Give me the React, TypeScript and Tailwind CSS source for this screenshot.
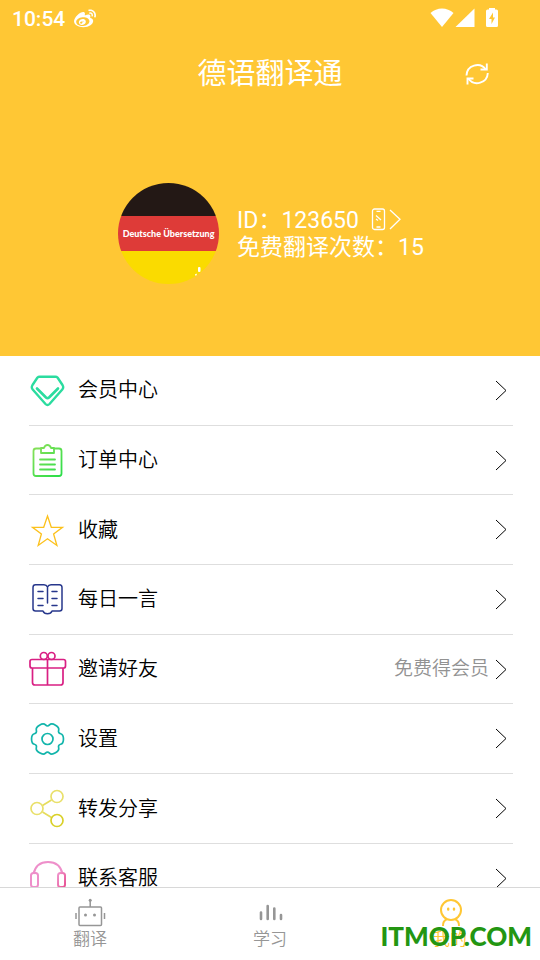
import type { ReactNode } from "react";
import { FaWeibo } from "react-icons/fa";

type MenuItem = {
  label: string;
  icon: ReactNode;
  note?: string;
};

function Chevron() {
  return (
    <svg width="12" height="21" viewBox="0 0 12 21" fill="none" stroke="currentColor" strokeWidth="1">
      <path d="M1 1L11 10.5L1 20" />
    </svg>
  );
}

function DiamondIcon() {
  return (
    <svg width="36" height="36" viewBox="0 0 36 36" fill="none" stroke="#2bdc9f" strokeLinejoin="round" strokeLinecap="round">
      <path strokeWidth="2.4" d="M10.500 4.700H26.500Q27.700 4.700 28.500 5.500L33.500 13Q35 15.500 33.300 17.500L20.500 32Q18.500 34 16.500 32L3.700 17.500Q2 15.500 3.500 13L8.500 5.500Q9.300 4.700 10.500 4.700Z" />
      <path strokeWidth="2.600" d="M8 16.500L17 25.500Q18.500 26.900 20 25.500L29 16.500" />
    </svg>
  );
}

function ClipboardIcon() {
  return (
    <svg width="36" height="36" viewBox="0 0 36 36" fill="none" stroke="url(#clip)" strokeWidth="1.800" strokeLinecap="round" strokeLinejoin="round">
      <defs>
        <linearGradient id="clip" gradientUnits="userSpaceOnUse" x1="4" y1="2" x2="32" y2="34">
          <stop offset="0" stopColor="#8fe05a" />
          <stop offset="1" stopColor="#2ade48" />
        </linearGradient>
      </defs>
      <path d="M11.500 6.500H7Q4.500 6.500 4.500 9V31.500Q4.500 34 7 34H30Q32.500 34 32.500 31.500V9Q32.500 6.500 30 6.500H25" />
      <path d="M12 11V6H15Q16 3 18.500 3T22 6H25V11Z" />
      <path d="M11 17.500H26M11 22.500L26 22.510M11 27.500H26" />
    </svg>
  );
}

function StarIcon() {
  return (
    <svg width="36" height="36" viewBox="0 0 36 36" fill="none" stroke="#fcc11c" strokeWidth="1.300">
      <path d="M18.500 4L22.300 15.300H33.500L24.600 22L27.900 33.500L18.500 26.800L9.200 33.500L12.400 22L3.500 15.300H14.700Z" />
    </svg>
  );
}

function BookIcon() {
  return (
    <svg width="36" height="36" viewBox="0 0 36 36" fill="none" stroke="#27378c" strokeWidth="1.500" strokeLinecap="round" strokeLinejoin="round">
      <path d="M18.500 22V6Q17.500 3.800 15 3.800H6.500Q4 3.800 4 6.500V27.500Q4 30 6.500 30H14Q15 32.800 18.500 32.800T23 30H30.500Q33 30 33 27.500V6.500Q33 3.800 30.500 3.800H22Q19.500 3.800 18.500 6" />
      <path d="M9 10.500H14M9 17.500H14M9 24.500H14M23 10.500H28M23 17.500H28M23 24.500H28" />
    </svg>
  );
}

function GiftIcon() {
  return (
    <svg width="38" height="36" viewBox="0 0 38 36" fill="none" stroke="#d91f83" strokeWidth="1.700" strokeLinejoin="round">
      <rect x="1" y="8.500" width="35.500" height="8.500" rx="2" />
      <path d="M3.500 17V31.500Q3.500 34 6 34H31.500Q34 34 34 31.500V17M18.500 8.500V34" />
      <circle cx="14.800" cy="5" r="3.500" />
      <circle cx="22.500" cy="5" r="3.500" />
    </svg>
  );
}

// Six-tooth cog: two outer points per tooth, one valley point between teeth,
// rounded by running the curve through the segment midpoints.
function cogPath(cx: number, cy: number, outer: number, inner: number) {
  const pts: [number, number][] = [];
  const add = (deg: number, r: number) => {
    const a = (deg * Math.PI) / 180;
    pts.push([cx + r * Math.cos(a), cy + r * Math.sin(a)]);
  };
  for (let i = 0; i < 6; i++) {
    add(i * 60 - 16, outer);
    add(i * 60 + 16, outer);
    add(i * 60 + 30, inner);
  }
  const mid = (i: number) => {
    const [x1, y1] = pts[i % pts.length];
    const [x2, y2] = pts[(i + 1) % pts.length];
    return `${((x1 + x2) / 2).toFixed(2)} ${((y1 + y2) / 2).toFixed(2)}`;
  };
  let d = `M${mid(0)}`;
  for (let i = 1; i <= pts.length; i++) {
    const [x, y] = pts[i % pts.length];
    d += `Q${x.toFixed(2)} ${y.toFixed(2)} ${mid(i)}`;
  }
  return d + "Z";
}

function GearIcon() {
  return (
    <svg width="36" height="36" viewBox="0 0 36 36" fill="none" stroke="#12b5ab" strokeWidth="1.700">
      <path d={cogPath(18.5, 18, 16.6, 12)} />
      <circle cx="18.500" cy="18" r="5.500" />
    </svg>
  );
}

function ShareIcon() {
  return (
    <svg width="36" height="40" viewBox="0 0 36 40" fill="none" strokeWidth="1.700">
      <path stroke="#e6dc5c" d="M13.500 16.500L22.500 11M13.500 23L22.500 28.500" />
      <circle stroke="#e9e06a" cx="8" cy="19.500" r="6" />
      <circle stroke="#e9e06a" cx="28" cy="7.500" r="6" />
      <circle stroke="#d9d028" cx="28" cy="31.500" r="6" />
    </svg>
  );
}

function HeadsetIcon() {
  return (
    <svg width="38" height="36" viewBox="0 0 38 36" fill="none" strokeWidth="2">
      <defs>
        <linearGradient id="ear" x1="0" y1="0" x2="1" y2="1">
          <stop offset="0" stopColor="#f095cc" />
          <stop offset="1" stopColor="#e85193" />
        </linearGradient>
      </defs>
      <path stroke="#ee8fca" d="M4.500 14Q7 2 19 2T33.500 14" />
      <rect stroke="#ee8fca" x="2" y="13" width="7" height="14" rx="2.500" />
      <rect stroke="url(#ear)" x="29" y="13" width="7" height="14" rx="2.500" />
    </svg>
  );
}

function Avatar() {
  return (
    <div className="relative flex size-[101px] shrink-0 flex-col overflow-hidden rounded-full">
      <div className="flex-1 bg-[#231815]" />
      <div className="flex h-[35px] items-center justify-center bg-[#de3b38] font-['Lato',sans-serif] text-[9px] font-black whitespace-nowrap text-white">
        Deutsche Übersetzung
      </div>
      <div className="flex-1 bg-[#fadb00]" />
      <svg className="absolute right-[18px] bottom-2" width="6" height="9" viewBox="0 0 6 9" fill="#fff">
        <rect x="3" y="0" width="2.500" height="5" rx="1" />
        <path d="M0 7.500L1.500 6.500L2 8.500H0Z" />
      </svg>
    </div>
  );
}

const menu: MenuItem[] = [
  { label: "会员中心", icon: <DiamondIcon /> },
  { label: "订单中心", icon: <ClipboardIcon /> },
  { label: "收藏", icon: <StarIcon /> },
  { label: "每日一言", icon: <BookIcon /> },
  { label: "邀请好友", icon: <GiftIcon />, note: "免费得会员" },
  { label: "设置", icon: <GearIcon /> },
  { label: "转发分享", icon: <ShareIcon /> },
  { label: "联系客服", icon: <HeadsetIcon /> },
];

const tabs = [
  {
    label: "翻译",
    active: false,
    icon: (
      <svg width="32" height="30" viewBox="0 0 32 30" fill="none" stroke="currentColor" strokeWidth="1.500">
        <rect x="5" y="9" width="22.500" height="18.500" rx="1" />
        <path d="M16.200 9V2M2 15V21M30.500 15V21" />
        <g fill="currentColor" stroke="none">
          <circle cx="16.200" cy="2.200" r="1.500" />
          <circle cx="11.500" cy="17" r="1.500" />
          <circle cx="20.500" cy="17" r="1.500" />
        </g>
      </svg>
    ),
  },
  {
    label: "学习",
    active: false,
    icon: (
      <svg width="32" height="30" viewBox="0 0 32 30" stroke="currentColor" strokeWidth="2.600" strokeLinecap="round">
        <path d="M7 14.500V21M13.700 8V21M20.300 10.500V21M27 17V21" />
      </svg>
    ),
  },
  {
    label: "我的",
    active: true,
    icon: (
      <svg width="32" height="30" viewBox="0 0 32 30" fill="none" stroke="currentColor" strokeWidth="2">
        <circle cx="17" cy="12" r="10" />
        <path d="M9 28Q8.800 23 12.500 21.500M25 28Q25.200 23 21.500 21.500" />
        <path strokeWidth="2.400" strokeLinecap="round" d="M14.200 10.800V11.500M20 10.800V11.500" />
      </svg>
    ),
  },
];

export default function App() {
  return (
    <div className="relative flex h-screen flex-col overflow-hidden bg-white font-['Roboto','Noto_Sans_CJK_SC',sans-serif]">
      <header className="bg-[#ffc734] text-white">
        {/* Status bar */}
        <div className="flex h-9 items-center justify-between pr-10 pl-3">
          <div className="flex items-center gap-[9px] pt-0.5">
            <span className="text-[21px] leading-6 font-medium">10:54</span>
            <FaWeibo size={22} />
          </div>
          <div className="flex items-center gap-px">
            <svg width="24" height="20" viewBox="0 0 24 20" fill="currentColor">
              <path d="M12 19L0.500 5Q5.500 0.500 12 0.500T23.500 5Z" />
            </svg>
            <svg width="20" height="20" viewBox="0 0 20 20" fill="currentColor">
              <path d="M0.500 19L19.500 0.500V19Z" />
            </svg>
            <svg className="ml-2" width="16" height="20" viewBox="0 0 16 20">
              <path fill="currentColor" d="M5 0H11V1.500H12.500Q14 1.500 14 3V17.500Q14 19 12.500 19H3.500Q2 19 2 17.500V3Q2 1.500 3.500 1.500H5Z" />
              <path fill="#ffc734" d="M9 4.500L5 11H7.500V16L11 9.500H9Z" />
            </svg>
          </div>
        </div>

        {/* Title */}
        <div className="grid h-[75px] grid-cols-[1fr_auto_1fr] items-center">
          <span />
          <h1 className="text-[29px] leading-9">德语翻译通</h1>
          <button type="button" aria-label="刷新" className="mr-[50px] justify-self-end">
            <svg width="26" height="26" viewBox="0 0 26 26" fill="none" stroke="currentColor" strokeWidth="1.900">
              <path d="M2.500 14.500A10.700 10.700 0 0 1 21.800 8.500M23.800 12A10.700 10.700 0 0 1 4.500 17.800" />
              <path d="M22.800 2.500V8.500H16.500M3.500 23.500V17.500H9.500" />
            </svg>
          </button>
        </div>

        {/* Profile */}
        <div className="flex h-[245px] items-center justify-center gap-[18px] pl-0.5">
          <Avatar />
          <div className="text-[23px] leading-[27px]">
            <button type="button" className="flex items-center">
              ID：123650
              <svg className="ml-3" width="30" height="24" viewBox="0 0 30 24" fill="none" stroke="currentColor" strokeWidth="1.300">
                <rect x="1.500" y="1" width="12" height="20.500" rx="2" />
                <path d="M5.500 3.300H9.500M5.500 19H9.500M5 7.500L10 12M5 11L7 12.500" />
                <path d="M19 2L29 11.300L19 21" />
              </svg>
            </button>
            <p>免费翻译次数：15</p>
          </div>
        </div>
      </header>

      <main className="min-h-0 flex-1 overflow-hidden">
        <ul className="grid min-h-[105%] auto-rows-fr pr-[27px] pl-[29px]">
          {menu.map((item) => (
            <li key={item.label} className="border-b border-[#dedede]">
              <button type="button" className="flex h-full w-full items-center pr-1.5 text-left">
                <span className="flex w-[38px] shrink-0">{item.icon}</span>
                <span className="ml-[11px] flex-1 text-[20px] leading-7 font-[350] text-black">{item.label}</span>
                {item.note && <span className="mr-1.5 text-[19px] leading-7 font-[350] text-[#929292]">{item.note}</span>}
                <Chevron />
              </button>
            </li>
          ))}
        </ul>
      </main>

      {/* Bottom tabs */}
      <nav className="grid h-[73px] shrink-0 grid-cols-3 border-t border-[#d8d8d8] bg-white">
        {tabs.map((tab) => (
          <button
            key={tab.label}
            type="button"
            className={`flex flex-col items-center pt-2.5 ${tab.active ? "text-[#ffc734]" : "text-[#969696]"}`}
          >
            {tab.icon}
            <span className="text-[17px] leading-[22px] font-[350]">{tab.label}</span>
          </button>
        ))}
      </nav>

      <div className="pointer-events-none absolute right-2 bottom-2 font-['Lato',sans-serif] text-[26px] leading-8 font-black text-[#239612]">
        ITMOP.COM
      </div>
    </div>
  );
}
